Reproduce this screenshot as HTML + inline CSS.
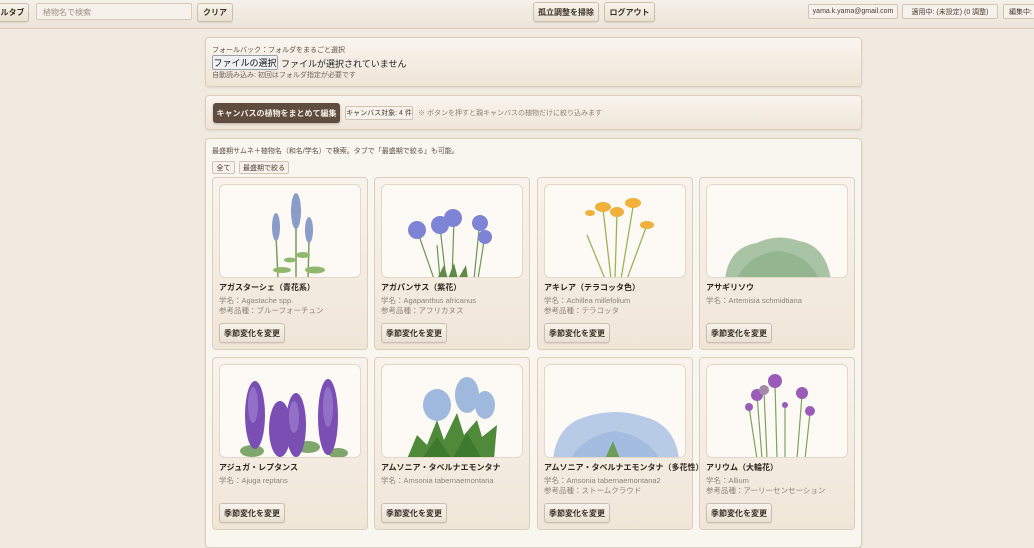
<!DOCTYPE html>
<html><head><meta charset="utf-8"><style>
*{box-sizing:border-box;margin:0;padding:0}
body{width:1034px;height:536px;overflow:hidden;background:#f0eae1;font-family:"Liberation Sans","Noto Sans CJK JP",sans-serif;color:#3a2f25;position:relative}
.a{position:absolute}
.top{left:0;top:0;width:1034px;height:29px;background:linear-gradient(#f5f0e9,#ece4d8);border-bottom:1px solid #d8cdbd}
.btn{position:absolute;border:1px solid #cbbfae;border-radius:3px;background:linear-gradient(#f8f3ec,#e9e0d2);font-size:8px;font-weight:bold;color:#3a2f25;display:flex;align-items:center;justify-content:center;box-shadow:0 1px 1px rgba(0,0,0,.08)}
.pill{position:absolute;border:1px solid #d0c5b5;border-radius:2px;background:#f6f1ea;font-size:7px;color:#4a4037;display:flex;align-items:center;justify-content:center}
.panel{position:absolute;left:205px;width:657px;border:1px solid #dccfbd;border-radius:4px;background:linear-gradient(#f9f5ef,#efe5d7);box-shadow:0 1px 2px rgba(0,0,0,.08)}
.card{position:absolute;width:156px;height:173px;border:1px solid #dccfbd;border-radius:4px;background:linear-gradient(#f8f3ec,#f0e6d8)}
.img{position:absolute;left:6px;top:6px;width:142px;height:94px;border:1px solid #e2d7c8;border-radius:6px;background:#fdf9f4;overflow:hidden}
.t{position:absolute;left:6px;top:104px;font-size:8px;font-weight:bold;color:#2e261e;white-space:nowrap}
.s{position:absolute;left:6px;font-size:7.5px;color:#8d8378;white-space:nowrap}
.cb{left:6px;top:145px;width:66px;height:20px}
</style></head><body>
<div class="a top"></div>
<div class="btn" style="left:-4px;top:3px;width:33px;height:19px">ルタブ</div>
<div class="a" style="left:36px;top:3px;width:156px;height:17px;border:1px solid #d6cab9;border-radius:2px;background:#f6f1ea;font-size:8px;color:#9b9084;padding:3px 6px">植物名で検索</div>
<div class="btn" style="left:197px;top:3px;width:36px;height:19px">クリア</div>
<div class="btn" style="left:533px;top:2px;width:66px;height:20px">孤立調整を掃除</div>
<div class="btn" style="left:604px;top:2px;width:51px;height:20px">ログアウト</div>
<div class="pill" style="left:808px;top:4px;width:90px;height:15px">yama.k.yama@gmail.com</div>
<div class="pill" style="left:902px;top:4px;width:96px;height:15px">適用中: (未設定) (0 調整)</div>
<div class="pill" style="left:1003px;top:4px;width:40px;height:15px;justify-content:flex-start;padding-left:5px">編集中:</div>

<div class="panel" style="top:37px;height:50px">
 <div class="a" style="left:6px;top:7px;font-size:7px;color:#5b5046">フォールバック：フォルダをまるごと選択</div>
 <div class="a" style="left:6px;top:17px;width:66px;height:15px;border:1px solid #9aa0a8;border-radius:2px;background:#eef0f3;font-size:9px;color:#111;display:flex;align-items:center;justify-content:center">ファイルの選択</div>
 <div class="a" style="left:75px;top:19px;font-size:9px;color:#222">ファイルが選択されていません</div>
 <div class="a" style="left:6px;top:32px;font-size:7px;color:#6e6358">自動読み込み: 初回はフォルダ指定が必要です</div>
</div>
<div class="panel" style="top:95px;height:35px">
 <div class="a" style="left:7px;top:7px;width:127px;height:20px;border-radius:3px;background:#5e4c3e;color:#f4ece2;font-size:8px;font-weight:bold;display:flex;align-items:center;justify-content:center;box-shadow:0 1px 2px rgba(0,0,0,.25)">キャンバスの植物をまとめて編集</div>
 <div class="pill" style="left:139px;top:10px;width:68px;height:14px">キャンバス対象: 4 件</div>
 <div class="a" style="left:212px;top:12px;font-size:7px;color:#8d8378">※ ボタンを押すと親キャンバスの植物だけに絞り込みます</div>
</div>
<div class="panel" style="top:138px;height:410px;background:#f9f5ef">
 <div class="a" style="left:6px;top:7px;font-size:7px;color:#5b5046">最盛期サムネ＋植物名（和名/学名）で検索。タブで「最盛期で絞る」も可能。</div>
 <div class="pill" style="left:6px;top:22px;width:23px;height:13px">全て</div>
 <div class="pill" style="left:33px;top:22px;width:50px;height:13px">最盛期で絞る</div>
</div>

<div class="card" style="left:212px;top:177px">
 <div class="img"><svg width="142" height="94" viewBox="0 0 142 94">
  <g stroke="#7aa05a" stroke-width="1.5" fill="none"><path d="M58 94 L56 50"/><path d="M76 94 L76 35"/><path d="M88 94 L89 55"/></g>
  <g fill="#8fb86c"><ellipse cx="62" cy="85" rx="9" ry="3"/><ellipse cx="83" cy="70" rx="7" ry="3"/><ellipse cx="95" cy="85" rx="10" ry="3.5"/><ellipse cx="70" cy="75" rx="6" ry="2.5"/></g>
  <g fill="#8a9cc8"><ellipse cx="56" cy="42" rx="4" ry="14"/><ellipse cx="76" cy="26" rx="5" ry="18"/><ellipse cx="89" cy="45" rx="4" ry="13"/></g>
 </svg></div>
 <div class="t">アガスターシェ（青花系）</div><div class="s" style="top:117px">学名：Agastache spp.</div><div class="s" style="top:127px">参考品種：ブルーフォーチュン</div>
 <div class="btn cb">季節変化を変更</div></div>
<div class="card" style="left:374px;top:177px">
 <div class="img"><svg width="142" height="94" viewBox="0 0 142 94">
  <g stroke="#6f9556" stroke-width="1.2" fill="none"><path d="M35 45 L52 94"/><path d="M58 42 L64 94"/><path d="M72 35 L70 94"/><path d="M98 35 L92 94"/><path d="M103 50 L96 94"/><path d="M55 60 L58 94"/></g>
  <path d="M55 94 L62 80 L66 94 L72 78 L76 94 L84 80 L86 94Z" fill="#5e8a45"/>
  <g fill="#7d84d6"><circle cx="35" cy="45" r="9"/><circle cx="58" cy="40" r="9"/><circle cx="71" cy="33" r="9"/><circle cx="98" cy="38" r="8"/><circle cx="103" cy="52" r="7"/></g>
 </svg></div>
 <div class="t">アガパンサス（紫花）</div><div class="s" style="top:117px">学名：Agapanthus africanus</div><div class="s" style="top:127px">参考品種：アフリカヌス</div>
 <div class="btn cb">季節変化を変更</div></div>
<div class="card" style="left:537px;top:177px">
 <div class="img"><svg width="142" height="94" viewBox="0 0 142 94">
  <g stroke="#9cb35a" stroke-width="1.3" fill="none"><path d="M58 24 L66 94"/><path d="M72 28 L70 94"/><path d="M88 22 L76 94"/><path d="M102 40 L82 94"/><path d="M42 50 L60 94"/></g>
  <g fill="#f0b03a"><ellipse cx="58" cy="22" rx="8" ry="5"/><ellipse cx="72" cy="27" rx="7" ry="5"/><ellipse cx="88" cy="18" rx="8" ry="5"/><ellipse cx="102" cy="40" rx="7" ry="4"/><ellipse cx="45" cy="28" rx="5" ry="3"/></g>
 </svg></div>
 <div class="t">アキレア（テラコッタ色）</div><div class="s" style="top:117px">学名：Achillea millefolium</div><div class="s" style="top:127px">参考品種：テラコッタ</div>
 <div class="btn cb">季節変化を変更</div></div>
<div class="card" style="left:699px;top:177px">
 <div class="img"><svg width="142" height="94" viewBox="0 0 142 94">
  <path d="M18 94 Q22 62 50 58 Q70 48 92 56 Q118 60 124 94Z" fill="#a9c4a4"/>
  <path d="M30 94 Q40 70 70 66 Q100 68 112 94Z" fill="#93b58f"/>
 </svg></div>
 <div class="t">アサギリソウ</div><div class="s" style="top:117px">学名：Artemisia schmidtiana</div>
 <div class="btn cb">季節変化を変更</div></div>

<div class="card" style="left:212px;top:357px">
 <div class="img"><svg width="142" height="94" viewBox="0 0 142 94">
  <g fill="#7fa66c"><ellipse cx="32" cy="86" rx="12" ry="6"/><ellipse cx="88" cy="82" rx="12" ry="6"/><ellipse cx="118" cy="88" rx="10" ry="5"/></g>
  <g fill="#7a4fb4"><ellipse cx="35" cy="50" rx="10" ry="34"/><ellipse cx="60" cy="64" rx="11" ry="28"/><ellipse cx="76" cy="60" rx="10" ry="32"/><ellipse cx="108" cy="52" rx="10" ry="38"/></g>
  <g fill="#9370c8"><ellipse cx="33" cy="40" rx="5" ry="18"/><ellipse cx="108" cy="42" rx="5" ry="20"/><ellipse cx="74" cy="52" rx="5" ry="16"/></g>
 </svg></div>
 <div class="t">アジュガ・レプタンス</div><div class="s" style="top:117px">学名：Ajuga reptans</div>
 <div class="btn cb">季節変化を変更</div></div>
<div class="card" style="left:374px;top:357px">
 <div class="img"><svg width="142" height="94" viewBox="0 0 142 94">
  <g fill="#9fb8de"><ellipse cx="55" cy="40" rx="14" ry="16"/><ellipse cx="85" cy="30" rx="12" ry="18"/><ellipse cx="103" cy="40" rx="10" ry="14"/></g>
  <path d="M25 94 L35 70 L45 80 L55 55 L62 75 L75 48 L82 70 L95 55 L100 72 L115 60 L112 94Z" fill="#4f8a3a"/>
  <path d="M40 94 L55 72 L70 94 L85 68 L100 94Z" fill="#3d7a2c"/>
 </svg></div>
 <div class="t">アムソニア・タベルナエモンタナ</div><div class="s" style="top:117px">学名：Amsonia tabernaemontana</div>
 <div class="btn cb">季節変化を変更</div></div>
<div class="card" style="left:537px;top:357px">
 <div class="img"><svg width="142" height="94" viewBox="0 0 142 94">
  <path d="M8 94 Q12 60 40 52 Q70 42 100 52 Q130 60 134 94Z" fill="#b8cbe6"/>
  <path d="M25 94 Q40 70 70 66 Q100 70 115 94Z" fill="#a4bcdf"/>
  <path d="M60 94 L68 76 L75 94Z" fill="#6f9a58"/>
 </svg></div>
 <div class="t">アムソニア・タベルナエモンタナ（多花性）</div><div class="s" style="top:117px">学名：Amsonia tabernaemontana2</div><div class="s" style="top:127px">参考品種：ストームクラウド</div>
 <div class="btn cb">季節変化を変更</div></div>
<div class="card" style="left:699px;top:357px">
 <div class="img"><svg width="142" height="94" viewBox="0 0 142 94">
  <g stroke="#7fa35f" stroke-width="1.2" fill="none"><path d="M42 42 L50 94"/><path d="M50 30 L55 94"/><path d="M57 26 L60 94"/><path d="M68 18 L70 94"/><path d="M78 42 L78 94"/><path d="M95 30 L90 94"/><path d="M103 48 L98 94"/></g>
  <g fill="#9a5cb8"><circle cx="42" cy="42" r="4"/><circle cx="50" cy="30" r="6"/><circle cx="68" cy="16" r="7"/><circle cx="95" cy="28" r="6"/><circle cx="103" cy="46" r="5"/><circle cx="78" cy="40" r="3"/></g>
  <circle cx="57" cy="25" r="5" fill="#a58aa8"/>
 </svg></div>
 <div class="t">アリウム（大輪花）</div><div class="s" style="top:117px">学名：Allium</div><div class="s" style="top:127px">参考品種：アーリーセンセーション</div>
 <div class="btn cb">季節変化を変更</div></div>
</body></html>
